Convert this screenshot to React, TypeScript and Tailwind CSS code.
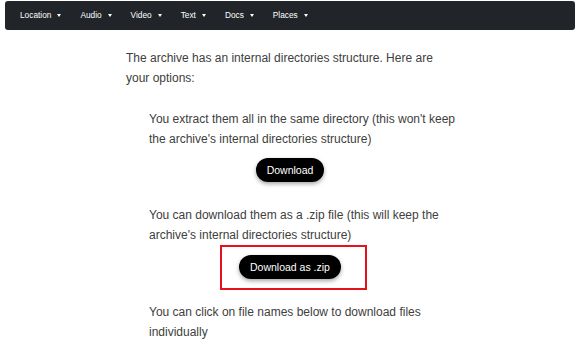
const menus = ['Location', 'Audio', 'Video', 'Text', 'Docs', 'Places'];

function Caret() {
  return <span className="ml-[6px] inline-block h-0 w-0 border-x-[2px] border-t-[3px] border-x-transparent border-t-white" />;
}

function DarkButton({ label }: { label: string }) {
  return (
    <button className="h-[24px] rounded-full bg-black px-[11px] text-[10.5px] leading-[24px] text-white shadow-[0_2px_4px_rgba(0,0,0,0.35)]">
      {label}
    </button>
  );
}

export default function App() {
  return (
    <main className="min-h-[341px] w-[580px] bg-white font-['Liberation_Sans',Arial,sans-serif]">

      <nav className="mx-[5px] mt-px flex h-[29px] items-center gap-[19px] rounded-[3px] bg-[#212529] pl-[15px]">
        {menus.map((m) => (
          <div key={m} className="flex items-center text-[8.3px] text-white">
            {m}
            <Caret />
          </div>
        ))}
      </nav>

      <section className="ml-[126px] mt-[18px] w-[332px] text-[12px] leading-[20px] text-[#404040]">

        <p>The archive has an internal directories structure. Here are your options:</p>

        <p className="ml-[23px] mt-[21px]">
          You extract them all in the same directory (this won't keep the archive's internal directories structure)
        </p>

        <div className="mt-[9px] flex w-[328px] justify-center">
          <DarkButton label="Download" />
        </div>

        <p className="ml-[23px] mt-[23px]">
          You can download them as a .zip file (this will keep the archive's internal directories structure)
        </p>

        <div className="ml-[94px] h-[45px] w-[147px] border-2 border-[#e3121b] pl-[17px] pt-[8px]">
          <DarkButton label="Download as .zip" />
        </div>

        <p className="ml-[23px] mt-[12px]">
          You can click on file names below to download files individually
        </p>

      </section>

    </main>
  );
}
